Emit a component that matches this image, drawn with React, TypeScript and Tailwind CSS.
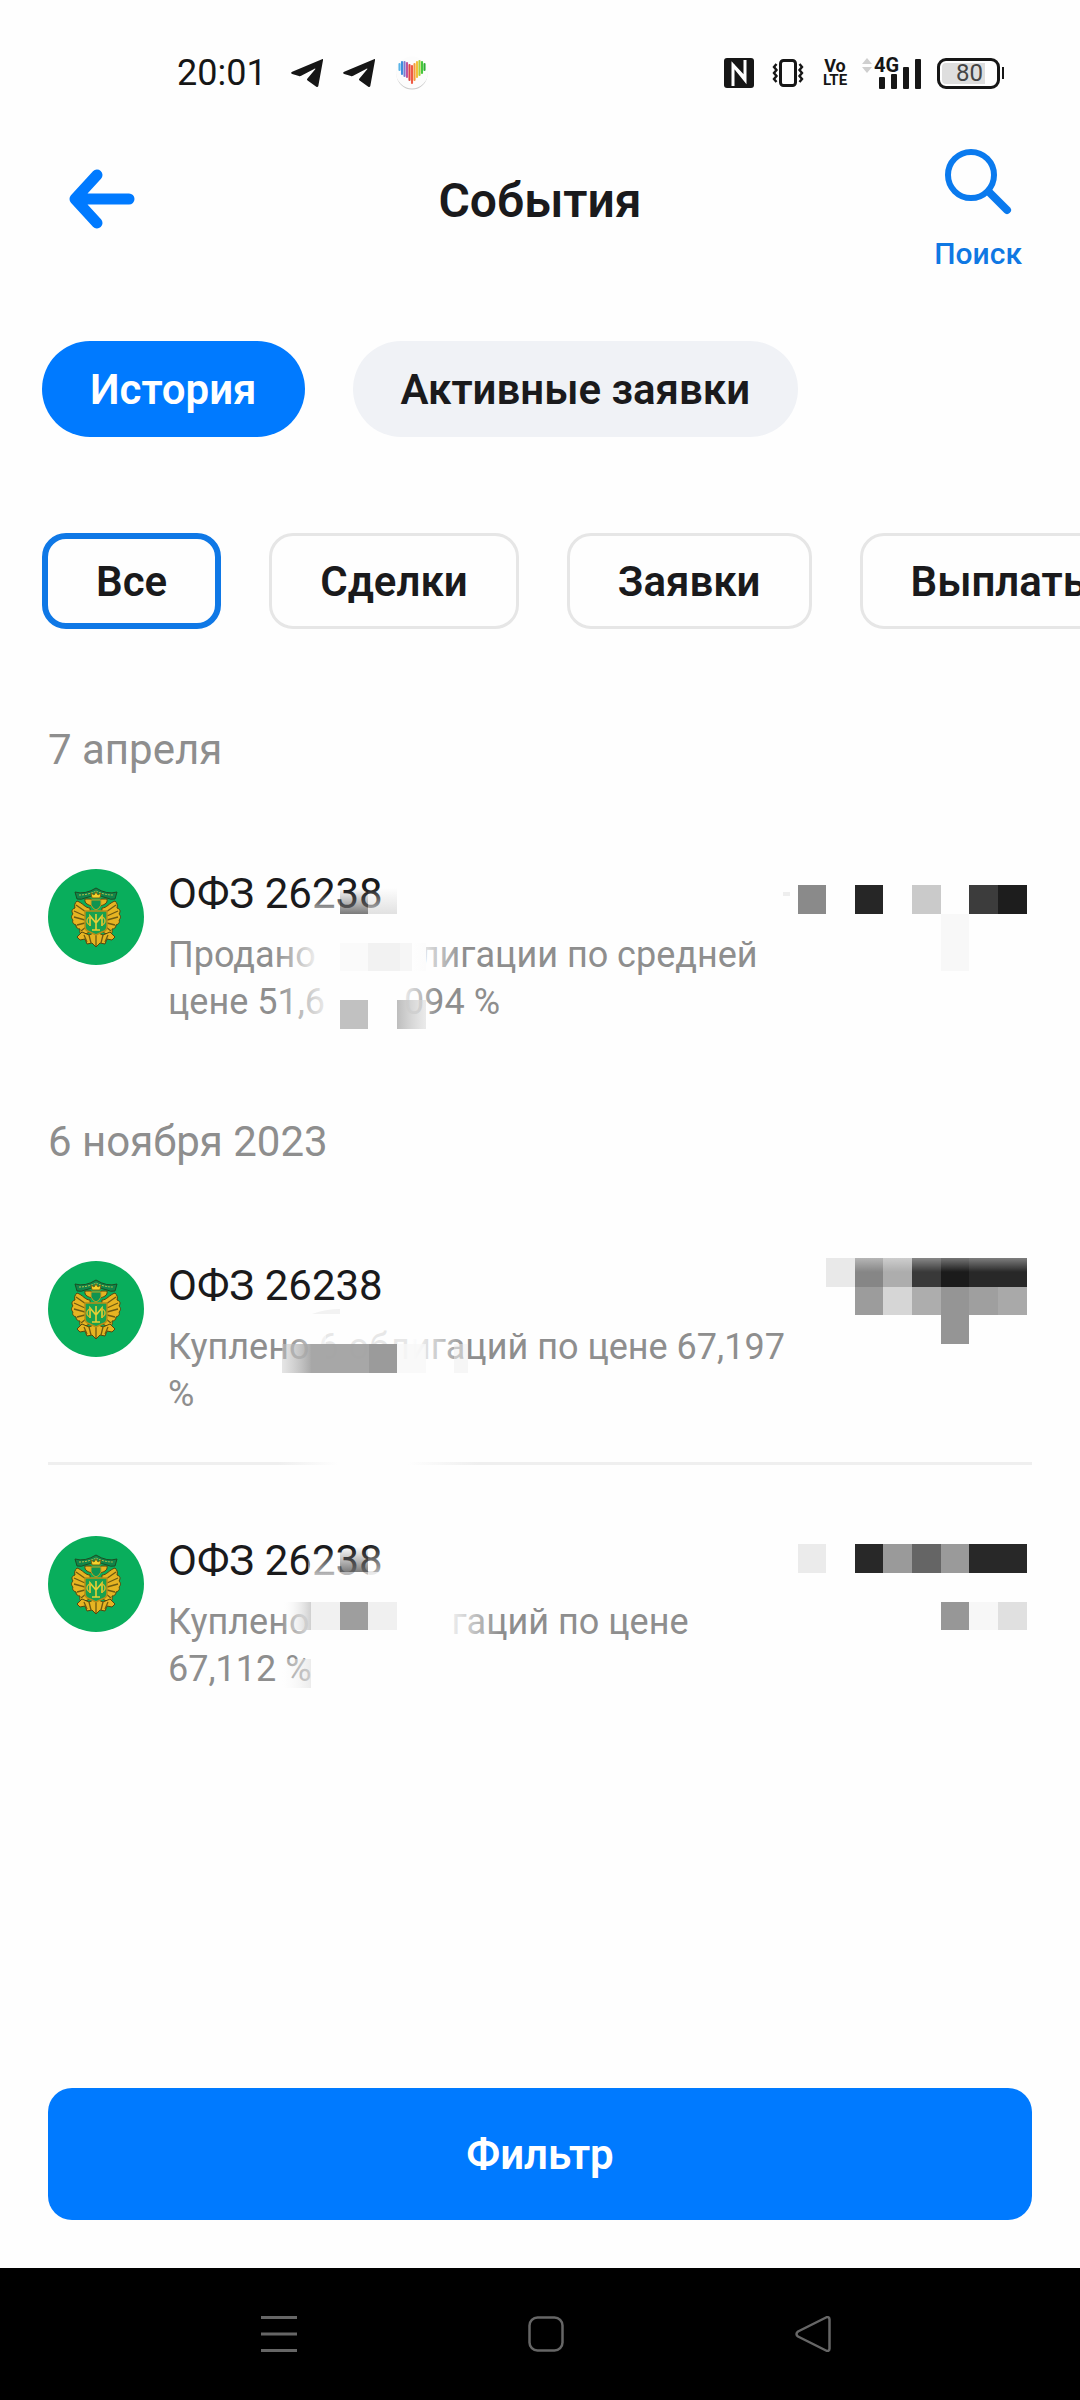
import type { ReactNode } from "react"

type Cell = [x: number, y: number, w: number, h: number, fill: string]

type Operation = {
  id: string
  title: string
  text: ReactNode
  veil: ReactNode
  amount: Cell[]
}

const Gap = ({ className }: { className: string }) => (
  <span className={`inline-block ${className}`} />
)

const Gradients = () => (
  <svg className="absolute size-0" aria-hidden="true">
    <defs>
      <linearGradient id="fadeIn">
        <stop offset="0" stopColor="#fefefe" stopOpacity="0" />
        <stop offset="1" stopColor="#fefefe" />
      </linearGradient>
      <linearGradient id="fadeOut">
        <stop offset="0" stopColor="#fefefe" />
        <stop offset="1" stopColor="#fefefe" stopOpacity="0" />
      </linearGradient>
      <linearGradient id="fadeDown" x2="0" y2="1">
        <stop offset="0" stopColor="#fefefe" stopOpacity="0" />
        <stop offset="1" stopColor="#fefefe" stopOpacity=".8" />
      </linearGradient>
      <linearGradient id="smokeDark" x2="0" y2="1">
        <stop offset="0.1" stopColor="#777" stopOpacity="0" />
        <stop offset="1" stopColor="#6c6c6c" stopOpacity=".9" />
      </linearGradient>
      <linearGradient id="smokeLight" x2="0" y2="1">
        <stop offset="0.1" stopColor="#ddd" stopOpacity="0" />
        <stop offset="1" stopColor="#dedede" stopOpacity=".9" />
      </linearGradient>
      <linearGradient id="smokeSide">
        <stop offset="0" stopColor="#fefefe" stopOpacity="0" />
        <stop offset="1" stopColor="#c4c4c4" stopOpacity=".8" />
      </linearGradient>
      <linearGradient id="smokeGray">
        <stop offset="0" stopColor="#ccc" stopOpacity=".5" />
        <stop offset="1" stopColor="#a0a0a0" stopOpacity=".9" />
      </linearGradient>
      <linearGradient id="paleSide">
        <stop offset="0" stopColor="#fefefe" stopOpacity=".2" />
        <stop offset="1" stopColor="#e4e4e4" stopOpacity=".7" />
      </linearGradient>
      <linearGradient id="grayOut">
        <stop offset="0" stopColor="#bdbdbd" />
        <stop offset="1" stopColor="#ddd" stopOpacity=".6" />
      </linearGradient>
      <linearGradient id="haze" x2="0" y2="1">
        <stop offset="0" stopColor="#fff" stopOpacity=".4" />
        <stop offset="0.7" stopColor="#fff" stopOpacity="0" />
      </linearGradient>
    </defs>
  </svg>
)

const april: Operation[] = [
  {
    id: "sold",
    title: "ОФЗ 26238",
    text: (
      <>
        Продано<Gap className="w-[103px]" />лигации по средней цене 51,6
        <Gap className="w-[79px]" />094 %
      </>
    ),
    veil: (
      <>
        <rect x="143" y="24" width="29" height="21" fill="url(#fadeDown)" />
        <rect x="172" y="16" width="28" height="29" fill="url(#smokeDark)" />
        <rect x="200" y="16" width="29" height="29" fill="url(#smokeLight)" />
        <rect x="108" y="66" width="46" height="42" fill="url(#fadeIn)" />
        <rect x="172" y="74" width="28" height="28" fill="#fafafa" />
        <rect x="200" y="74" width="32" height="28" fill="#f2f2f2" />
        <rect x="232" y="74" width="26" height="28" fill="#f6f6f6" />
        <rect x="244" y="66" width="52" height="42" fill="url(#fadeOut)" />
        <rect x="108" y="114" width="60" height="42" fill="url(#fadeIn)" />
        <rect x="230" y="112" width="40" height="42" fill="url(#fadeOut)" />
        <rect x="172" y="131" width="28" height="29" fill="#c1c1c1" />
        <rect x="229" y="131" width="29" height="29" fill="url(#grayOut)" />
      </>
    ),
    amount: [
      [0, 16, 28, 29, "#8a8a8a"],
      [57, 16, 28, 29, "#262626"],
      [114, 16, 29, 29, "#cacaca"],
      [171, 16, 29, 29, "#3c3c3c"],
      [200, 16, 29, 29, "#1d1d1d"],
      [143, 45, 28, 57, "#f8f8f8"],
      [-15, 23, 7, 4, "#eeeeee"],
    ],
  },
]

const november: Operation[] = [
  {
    id: "bought-1",
    title: "ОФЗ 26238",
    text: (
      <>
        Куплено <span className="text-[#d8d8d8]">6</span>
        <Gap className="w-[10px]" />
        <span className="text-[#d8d8d8]">обл</span>игаций по цене 67,197 %
      </>
    ),
    veil: (
      <>
        <path d="M144 53q14-5 28-5v5z" fill="#f2f2f2" />
        <rect x="118" y="66" width="40" height="42" fill="url(#fadeIn)" opacity=".7" />
        <rect x="158" y="66" width="90" height="46" fill="#fefefe" opacity=".4" />
        <rect x="244" y="66" width="56" height="46" fill="url(#fadeOut)" />
        <rect x="114" y="83" width="29" height="29" fill="url(#smokeGray)" />
        <rect x="143" y="83" width="58" height="29" fill="#a2a2a2" opacity=".95" />
        <rect x="201" y="83" width="28" height="29" fill="#9b9b9b" />
        <rect x="229" y="83" width="29" height="29" fill="#f8f8f8" opacity=".8" />
        <rect x="286" y="83" width="14" height="29" fill="#eee" opacity=".5" />
      </>
    ),
    amount: [
      [28, -3, 29, 29, "#e9e9e9"],
      [57, -3, 28, 29, "#868686"],
      [85, -3, 29, 29, "#adadad"],
      [114, -3, 29, 29, "#393939"],
      [143, -3, 28, 29, "#1b1b1b"],
      [171, -3, 58, 29, "#282828"],
      [57, 26, 28, 28, "#9c9c9c"],
      [85, 26, 29, 28, "#d6d6d6"],
      [114, 26, 29, 28, "#adadad"],
      [143, 26, 28, 57, "#959595"],
      [171, 26, 29, 28, "#9f9f9f"],
      [200, 26, 29, 28, "#a9a9a9"],
    ],
  },
  {
    id: "bought-2",
    title: "ОФЗ 26238",
    text: (
      <>
        Куплено<Gap className="w-[142px]" />гаций по цене 67,112 %
      </>
    ),
    veil: (
      <>
        <rect x="140" y="14" width="32" height="28" fill="url(#fadeDown)" />
        <rect x="172" y="8" width="28" height="28" fill="url(#smokeDark)" />
        <rect x="200" y="8" width="29" height="34" fill="url(#fadeDown)" />
        <rect x="172" y="36" width="57" height="6" fill="#fefefe" opacity=".7" />
        <rect x="112" y="64" width="31" height="44" fill="url(#fadeIn)" opacity=".7" />
        <rect x="114" y="66" width="29" height="28" fill="url(#smokeSide)" />
        <rect x="143" y="66" width="29" height="28" fill="#f1f1f1" />
        <rect x="172" y="66" width="28" height="28" fill="#9e9e9e" />
        <rect x="200" y="66" width="29" height="28" fill="#f0f0f0" />
        <rect x="276" y="64" width="56" height="44" fill="url(#fadeOut)" />
        <rect x="114" y="123" width="29" height="29" fill="url(#paleSide)" />
      </>
    ),
    amount: [
      [0, 8, 28, 29, "#ebebeb"],
      [57, 8, 28, 29, "#282828"],
      [85, 8, 29, 29, "#9a9a9a"],
      [114, 8, 29, 29, "#656565"],
      [143, 8, 28, 29, "#9a9a9a"],
      [171, 8, 58, 29, "#282828"],
      [143, 66, 28, 28, "#979797"],
      [171, 66, 29, 28, "#f7f7f7"],
      [200, 66, 29, 28, "#e0e0e0"],
    ],
  },
]

const Telegram = () => (
  <svg viewBox="0 0 32 28" className="h-7 w-8" fill="#161616">
    <path d="M31 .2c.8-.3 1.200.2 1 1.100l-4.700 25.600c-.2 1-1.100 1.400-2 .8l-8.700-6.200c-.8-.6-.8-1.400-.1-2.100l7.700-9.200c.3-.5-.1-.8-.6-.5L10.200 16.800c-.7.4-1.500.5-2.300.2L1.200 15c-1.400-.5-1.400-1.500 0-2.200z" />
  </svg>
)

const StatusBar = () => (
  <div className="flex items-center justify-between pt-[51px] pr-[76px] pl-[177px] text-[#161616]">
    <div className="flex h-11 items-center">
      <span className="text-[36px] leading-[44px]">20:01</span>
      <div className="ml-6 flex items-center gap-5">
        <Telegram />
        <Telegram />
        <svg viewBox="0 0 34 34" className="size-[34px]">
          <circle cx="17" cy="18" r="15.500" fill="#c9c9c9" />
          <circle cx="17" cy="16.500" r="16" fill="#fcfcfc" />
          <g strokeWidth="2.100" strokeLinecap="round">
            <path d="M4.500 8v6" stroke="#59b4e8" />
            <path d="M7 6v12" stroke="#3f8fdc" />
            <path d="M9.500 6v14" stroke="#7d7bd0" />
            <path d="M12 7v14" stroke="#c0559d" />
            <path d="M14.500 9v15" stroke="#e0473f" />
            <path d="M17 10v17" stroke="#ee5a45" />
            <path d="M19.500 8v16" stroke="#f39a3d" />
            <path d="M22 6v15" stroke="#f3c23a" />
            <path d="M24.500 5v14" stroke="#a9d037" />
            <path d="M27 6v11" stroke="#45c73c" />
            <path d="M29.500 8v6" stroke="#2fae36" />
          </g>
        </svg>
      </div>
    </div>
    <div className="flex h-11 items-center">
      <svg viewBox="0 0 30 30" className="size-[30px]">
        <rect width="30" height="30" rx="3" fill="#161616" />
        <path d="M9 28V7l12 13M21 2v20L9 7" fill="none" stroke="#fff" strokeWidth="3" />
      </svg>
      <svg viewBox="0 0 32 30" className="ml-[18px] h-[30px] w-8" fill="none" stroke="#161616">
        <rect x="8.500" y="2.500" width="15" height="25" rx="3" strokeWidth="3" />
        <path d="M4.500 6l-2.500 3 2.500 3-2.500 3 2.500 3-2.500 3 2.500 3M27.500 6l2.500 3-2.500 3 2.500 3-2.500 3 2.500 3-2.500 3" strokeWidth="2.400" />
      </svg>
      <div className="ml-[17px] w-7 text-center text-[18px] leading-[15px] font-bold">
        <div>Vo</div>
        <div className="text-[15px]">LTE</div>
      </div>
      <svg viewBox="0 0 62 34" className="ml-3 h-[34px] w-[62px] overflow-visible" fill="#161616">
        <path d="M1 8l5-6 5 6zM1 11l5 6 5-6z" fill="#cfcfcf" />
        <text x="13" y="16" fontSize="20" fontWeight="700">4G</text>
        <rect x="18" y="21" width="6" height="12" rx="1" />
        <rect x="30" y="18" width="6" height="15" rx="1" />
        <rect x="42" y="11" width="6" height="22" rx="1" />
        <rect x="54" y="3" width="6" height="30" rx="1" />
      </svg>
      <div className="ml-3.5 flex items-center gap-0.5">
        <div className="h-[31px] w-[63px] rounded-[9px] border-[3px] border-[#161616] p-[2px]">
          <div className="flex h-full w-[43px] items-center justify-end rounded-l-[4px] bg-[#dedede] pr-[2px] text-[24px] leading-5 text-[#444]">
            80
          </div>
        </div>
        <div className="h-3 w-0.5 bg-[#161616]" />
      </div>
    </div>
  </div>
)

const Header = () => (
  <header className="grid grid-cols-[1fr_auto_1fr] items-start px-[58px] pt-[52px]">
    <button type="button" aria-label="Назад" className="w-fit px-[10px] pt-[22px]">
      <svg viewBox="0 0 68 60" className="h-[60px] w-[68px]" fill="none" stroke="#007aff" strokeWidth="11" strokeLinecap="round" strokeLinejoin="round">
        <path d="M29 6L7 30l22 24M10 30h51" />
      </svg>
    </button>
    <h1 className="pt-[26px] text-[48px] leading-[56px] font-semibold text-[#1a1a1c]">События</h1>
    <button type="button" className="flex flex-col items-center gap-[21px] justify-self-end text-[#0f78e3]">
      <svg viewBox="0 0 68 68" className="size-[68px]" fill="none" stroke="#0a7aee" strokeLinecap="round">
        <circle cx="27" cy="28" r="23" strokeWidth="6" />
        <path d="M45 45l18 18" strokeWidth="8" />
      </svg>
      <span className="text-[30px] leading-9 font-medium">Поиск</span>
    </button>
  </header>
)

const Emblem = () => (
  <svg viewBox="0 0 96 96" className="size-24 shrink-0">
    <circle cx="48" cy="48" r="48" fill="#09ae5c" />
    <path d="M27 23q10 3 21-4 11 7 21 4l-2 7q-5 1-8-1-11-4-22 0-3 2-8 1z" fill="#10854a" stroke="#1c4d22" />
    <path d="M31 26q9 0 17-4 8 4 17 4" fill="none" stroke="#b9c24a" strokeDasharray="2 1" />
    {/* wings */}
    <g fill="#e6b422" stroke="#54470f">
      <path d="M42 39c-5 0-7-5-13-7-2 2-3 4-2 7-3 1-4 3-2 6-2 2-2 4 0 6-1 2 0 4 3 5 0 3 2 4 4 4-1 4 1 6 4 6l7-4z" />
      <path d="M54 39c5 0 7-5 13-7 2 2 3 4 2 7 3 1 4 3 2 6 2 2 2 4 0 6 1 2 0 4-3 5 0 3-2 4-4 4 1 4-1 6-4 6l-7-4z" />
      <path d="M29 68l5-5 7 3 7-3 7 3 7-3 5 5-3 3-5-1-2 5-5-1-4 4-4-4-5 1-2-5-5 1z" />
    </g>
    <path d="M28 36l10 7M26 42l11 5M26 48l11 3M29 56l8-2M33 62l5-4M68 36l-10 7M70 42l-11 5M70 48l-11 3M67 56l-8-2M63 62l-5-4M36 66l3 7M41 66l2 8M48 66v11M55 66l-2 8M60 66l-3 7" stroke="#6e5b12" strokeWidth="1.300" />
    {/* heads and crown */}
    <path d="M44 37c-3-1-8-2-7-7l6 0 3 4M52 37c3-1 8-2 7-7l-6 0-3 4" fill="#e6b422" stroke="#54470f" />
    <path d="M44 29l-1-5 3 2 2-3 2 3 3-2-1 5z" fill="#f4d32c" stroke="#7c6410" />
    <path d="M43 31h10v5q-2 4-5 5-3-1-5-5z" fill="#0f9450" stroke="#caa01d" />
    {/* shield with monogram */}
    <path d="M37 42h22v15q0 5-5 6l-6 3-6-3q-5-1-5-6z" fill="#18a14f" stroke="#b88e18" strokeWidth="1.500" />
    <path d="M42 57V47l6 7 6-7v10M48 45v16M44 61h8" fill="none" stroke="#e8cf35" strokeWidth="1.600" />
    <path d="M43 48a4 4 0 1 0 0 8M53 48a4 4 0 1 1 0 8" fill="none" stroke="#d9b92b" strokeWidth="1.500" />
  </svg>
)

const OperationRow = ({ operation }: { operation: Operation }) => (
  <li className="flex items-start">
    <Emblem />
    <div className="relative ml-6 flex-1">
      <h3 className="text-[42px] leading-[50px] text-[#1a1a1c]">{operation.title}</h3>
      <p className="mt-[13px] text-[36px] leading-[47px] text-[#8e8e8e]">{operation.text}</p>
      <svg width="340" height="160" className="absolute top-0 left-0 overflow-visible" aria-hidden="true">
        {operation.veil}
      </svg>
    </div>
    <svg width="234" height="110" className="shrink-0 overflow-visible" shapeRendering="crispEdges" aria-hidden="true">
      {operation.amount.map(([x, y, w, h, fill]) => (
        <rect key={`${x}:${y}`} x={x} y={y} width={w} height={h} fill={fill} />
      ))}
      {operation.id === "bought-1" && <rect x="57" y="-3" width="172" height="20" fill="url(#haze)" />}
    </svg>
  </li>
)

const Chip = ({ label, active }: { label: string; active?: boolean }) => (
  <button
    type="button"
    className={`h-24 shrink-0 rounded-3xl px-12 text-[42px] font-semibold text-[#1a1a1c] ${
      active ? "border-[6px] border-[#0f78e6]" : "border-[3px] border-[#e6e6e6]"
    }`}
  >
    {label}
  </button>
)

const NavBar = () => (
  <nav className="flex h-[132px] items-center justify-center gap-[231px] bg-black pl-3">
    <button type="button" aria-label="Недавние">
      <svg viewBox="0 0 36 36" className="size-9" stroke="#666" strokeWidth="3">
        <path d="M0 1.500h36M0 18h36M0 34.500h36" />
      </svg>
    </button>
    <button type="button" aria-label="Домой">
      <svg viewBox="0 0 36 36" className="size-9" fill="none" stroke="#666" strokeWidth="2.500">
        <rect x="1.500" y="1.500" width="33" height="33" rx="8" />
      </svg>
    </button>
    <button type="button" aria-label="Назад в системе">
      <svg viewBox="0 0 36 36" className="size-9" fill="none" stroke="#666" strokeWidth="2.500" strokeLinejoin="round">
        <path d="M31 1.500c2-1 3.500 0 3.500 2v29c0 2-1.500 3-3.500 2L3 20.500c-2-1.500-2-3.500 0-5z" />
      </svg>
    </button>
  </nav>
)

const App = () => {
  return (
    <div className="flex min-h-screen flex-col overflow-x-hidden bg-[#fefefe] font-['Roboto',sans-serif]">
      <Gradients />
      <StatusBar />
      <Header />
      <div className="mt-[69px] flex gap-12 px-[42px]">
        <button type="button" className="h-24 rounded-full bg-[#007aff] px-12 text-[42px] font-semibold text-white">
          История
        </button>
        <button type="button" className="h-24 rounded-full bg-[#f0f2f6] px-12 text-[42px] font-semibold text-[#1a1a1c]">
          Активные заявки
        </button>
      </div>
      <div className="mt-24 flex gap-12 overflow-hidden pl-[42px]">
        <Chip label="Все" active />
        <Chip label="Сделки" />
        <Chip label="Заявки" />
        <Chip label="Выплаты" />
      </div>
      <main className="px-12">
        <section>
          <h2 className="mt-24 text-[42px] leading-[50px] text-[#8e8e8e]">7 апреля</h2>
          <ul className="mt-[94px]">
            {april.map((operation) => (
              <OperationRow key={operation.id} operation={operation} />
            ))}
          </ul>
        </section>
        <section>
          <h2 className="mt-[91px] text-[42px] leading-[50px] text-[#8e8e8e]">6 ноября 2023</h2>
          <ul className="mt-[94px]">
            <OperationRow operation={november[0]} />
            <li className="mt-11 mb-[71px] h-[3px] bg-[linear-gradient(to_right,#efefef_230px,#fefefe_290px,#fefefe_360px,#efefef_430px)]" />
            <OperationRow operation={november[1]} />
          </ul>
        </section>
      </main>
      <div className="mt-auto px-12 pt-12 pb-12">
        <button type="button" className="h-[132px] w-full rounded-3xl bg-[#007aff] text-[42px] font-semibold text-white">
          Фильтр
        </button>
      </div>
      <NavBar />
    </div>
  )
}

export default App
